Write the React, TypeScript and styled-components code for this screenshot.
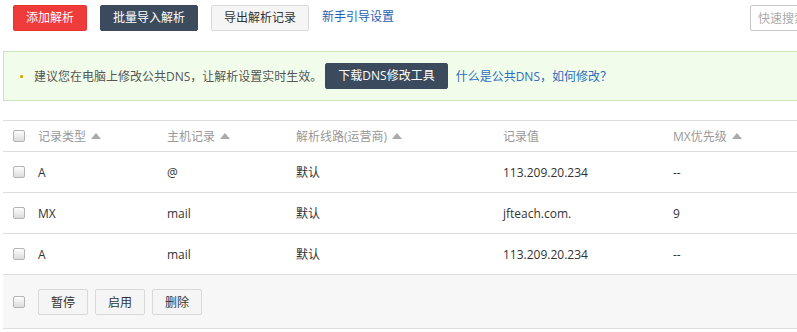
import * as React from 'react';
import styled, { createGlobalStyle } from 'styled-components';

const GlobalStyle = createGlobalStyle`
  html, body {
    margin: 0;
    padding: 0;
    background: #fff;
    overflow: hidden;
  }
  body {
    font-family: "Open Sans", "Noto Sans CJK SC", sans-serif;
    font-size: 12px;
    color: #333;
  }
`;

type RecordRow = {
  type: string;
  host: string;
  line: string;
  value: string;
  mx: string;
};

const records: RecordRow[] = [
  { type: 'A', host: '@', line: '默认', value: '113.209.20.234', mx: '--' },
  { type: 'MX', host: 'mail', line: '默认', value: 'jfteach.com.', mx: '9' },
  { type: 'A', host: 'mail', line: '默认', value: '113.209.20.234', mx: '--' },
];

function App() {
  return (
    <>
      <GlobalStyle />
      <Page>
        <Toolbar>
          <Button $variant="danger">添加解析</Button>
          <Button $variant="dark">批量导入解析</Button>
          <Button $variant="light">导出解析记录</Button>
          <Link>新手引导设置</Link>
          <SearchInput placeholder="快速搜索" />
        </Toolbar>

        <Alert>
          <Bullet />
          <AlertText>建议您在电脑上修改公共DNS，让解析设置实时生效。</AlertText>
          <Button $variant="dark">下载DNS修改工具</Button>
          <AlertLink>什么是公共DNS，如何修改？</AlertLink>
        </Alert>

        <Table>
          <colgroup>
            <col style={{ width: 35 }} />
            <col style={{ width: 129 }} />
            <col style={{ width: 129 }} />
            <col style={{ width: 207 }} />
            <col style={{ width: 170 }} />
            <col />
          </colgroup>
          <thead>
            <tr>
              <HeadCell>
                <Check />
              </HeadCell>
              <HeadCell>
                记录类型<SortArrow />
              </HeadCell>
              <HeadCell>
                主机记录<SortArrow />
              </HeadCell>
              <HeadCell>
                解析线路(运营商)<SortArrow />
              </HeadCell>
              <HeadCell>记录值</HeadCell>
              <HeadCell>
                MX优先级<SortArrow />
              </HeadCell>
            </tr>
          </thead>
          <tbody>
            {records.map((r, i) => (
              <tr key={i}>
                <Cell>
                  <Check />
                </Cell>
                <Cell>{r.type}</Cell>
                <Cell>{r.host}</Cell>
                <Cell>{r.line}</Cell>
                <Cell>{r.value}</Cell>
                <Cell>{r.mx}</Cell>
              </tr>
            ))}
          </tbody>
          <tfoot>
            <tr>
              <FootCell>
                <Check />
              </FootCell>
              <FootCell colSpan={5}>
                <FootActions>
                  <SmallButton>暂停</SmallButton>
                  <SmallButton>启用</SmallButton>
                  <SmallButton>删除</SmallButton>
                </FootActions>
              </FootCell>
            </tr>
          </tfoot>
        </Table>
      </Page>
    </>
  );
}

const Page = styled.div`
  width: 867px;
  padding-left: 3px;
`;

const Toolbar = styled.div`
  display: flex;
  align-items: center;
  padding: 5px 0 0 10px;
  height: 26px;
`;

const variants = {
  danger: { bg: '#ef3b3a', border: '#e73534', color: '#fff' },
  dark: { bg: '#3b4a5c', border: '#3b4a5c', color: '#fff' },
  light: { bg: '#f5f5f5', border: '#d9d9d9', color: '#333' },
};

const Button = styled.button<{ $variant: keyof typeof variants }>`
  height: 26px;
  padding: 0 12px;
  margin-right: 13px;
  border: 1px solid ${(p) => variants[p.$variant].border};
  border-radius: 2px;
  background: ${(p) => variants[p.$variant].bg};
  color: ${(p) => variants[p.$variant].color};
  font: inherit;
  font-size: 12px;
  line-height: 24px;
  white-space: nowrap;
  cursor: pointer;
`;

const Link = styled.a`
  color: #1f5fb5;
  font-size: 12px;
  line-height: 26px;
  margin-top: -3px;
  cursor: pointer;
`;

const SearchInput = styled.input`
  margin-left: auto;
  width: 120px;
  height: 26px;
  box-sizing: border-box;
  border: 1px solid #c8c8c8;
  border-radius: 2px;
  padding: 0 7px;
  font: inherit;
  font-size: 12px;
  &::placeholder {
    color: #aaa;
  }
`;

const Alert = styled.div`
  display: flex;
  align-items: center;
  margin-top: 20px;
  height: 48px;
  border: 1px solid #c9e5bd;
  background: #f1fdea;
  padding-left: 16px;
`;

const Bullet = styled.span`
  width: 3px;
  height: 3px;
  border-radius: 1px;
  background: #e0a300;
  margin-right: 11px;
`;

const AlertText = styled.span`
  color: #555;
  margin-right: 3px;
`;

const AlertLink = styled.a`
  color: #2d6dbf;
  margin-left: -5px;
  cursor: pointer;
`;

const Table = styled.table`
  margin-top: 19px;
  width: 100%;
  border-collapse: collapse;
  table-layout: fixed;
`;

const HeadCell = styled.th`
  height: 30px;
  padding: 0;
  border-top: 1px solid #ddd;
  text-align: left;
  font-weight: normal;
  color: #999;
  vertical-align: middle;
  &:first-child {
    padding-left: 10px;
  }
`;

const Cell = styled.td`
  height: 40px;
  padding: 0;
  border-top: 1px solid #ddd;
  color: #333;
  vertical-align: middle;
  &:first-child {
    padding-left: 10px;
  }
`;

const FootCell = styled.td`
  height: 53px;
  padding: 0;
  border-top: 1px solid #ddd;
  border-bottom: 1px solid #ddd;
  background: #f7f7f7;
  vertical-align: middle;
  &:first-child {
    padding-left: 10px;
  }
`;

const FootActions = styled.div`
  display: flex;
  gap: 7px;
`;

const SmallButton = styled.button`
  width: 50px;
  height: 26px;
  border: 1px solid #d9d9d9;
  border-radius: 2px;
  background: #f5f5f5;
  color: #333;
  font: inherit;
  font-size: 12px;
  padding: 0;
  cursor: pointer;
`;

const Check = styled.span`
  display: block;
  width: 12px;
  height: 12px;
  box-sizing: border-box;
  border: 1px solid #b4b4b4;
  border-radius: 2px;
  background: linear-gradient(#fdfdfd, #dcdcdc);
`;

const SortArrow = styled.span`
  display: inline-block;
  margin-left: 5px;
  vertical-align: 2px;
  width: 0;
  height: 0;
  border-left: 5px solid transparent;
  border-right: 5px solid transparent;
  border-bottom: 6px solid #aaa;
`;

export default App;
